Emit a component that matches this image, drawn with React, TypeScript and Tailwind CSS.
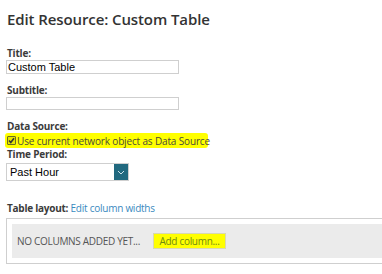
import React from "react";

export default function App() {
  const label = "font-['Open_Sans',sans-serif] font-bold text-[10px] leading-[14px] tracking-[-0.2px] text-[#3b3b3b]";
  return (
    <div className="w-[382px] h-[274px] overflow-hidden bg-white pl-[7px] pt-[9px]">
      <div className="font-['Open_Sans',sans-serif] font-semibold text-[15px] leading-[20px] text-[#333] tracking-[-0.1px]">
        Edit Resource: Custom Table
      </div>

      <div className={`${label} mt-[17px]`}>Title:</div>
      <div className="-ml-[1px] w-[173px] h-[14px] border border-[#cfcfcf] bg-white flex items-center px-[1px] font-['Liberation_Sans',Arial,sans-serif] text-[11px] text-black">
        Custom Table
      </div>

      <div className={`${label} mt-[9px]`}>Subtitle:</div>
      <div className="-ml-[1px] w-[173px] h-[13px] border border-[#cfcfcf] bg-white" />

      <div className={`${label} mt-[9px]`}>Data Source:</div>
      <div className="-ml-[2px] w-[203px] h-[15px] bg-[#ffff00] rounded-[3px] flex items-center pl-[2px]">
        <span className="w-[9px] h-[9px] border border-[#6b6b20] bg-[#e6e600] flex items-center justify-center rounded-[1px] shrink-0">
          <svg width="7" height="7" viewBox="0 0 7 7">
            <path d="M1 3.5 L2.8 5.5 L6 1.2" stroke="#333" strokeWidth="1.6" fill="none" />
          </svg>
        </span>
        <span className="ml-[1px] whitespace-nowrap font-['Open_Sans',sans-serif] text-[10px] leading-[14px] tracking-[-0.15px] text-[#4a4a3a]">
          Use current network object as Data Source
        </span>
      </div>

      <div className={`${label} -mt-[1px]`}>Time Period:</div>
      <div className="mt-[2px] -ml-[1px] w-[123px] h-[18px] border border-[#cfcfcf] bg-white flex items-stretch">
        <span className="flex-1 flex items-center pl-[3px] font-['Liberation_Sans',Arial,sans-serif] text-[11px] text-black">
          Past Hour
        </span>
        <span className="w-[14px] bg-[#21697f] flex items-center justify-center">
          <svg width="8" height="5" viewBox="0 0 8 5">
            <path d="M1 1 L4 4 L7 1" stroke="#cfe3ea" strokeWidth="1" fill="none" />
          </svg>
        </span>
      </div>

      <div className="mt-[20px] font-['Open_Sans',sans-serif] text-[10px] leading-[14px] tracking-[-0.25px] whitespace-nowrap">
        <span className="font-bold text-[#3b3b3b]">Table layout:</span>{" "}
        <span className="text-[#3a8ac0]">Edit column widths</span>
      </div>
      <div className="mt-[3px] -ml-[1px] w-[400px] border border-[#cfcfcf] p-[5px]">
        <div className="h-[34px] bg-[#ebebeb] flex items-center pl-[5px]">
          <span className="font-['Open_Sans',sans-serif] text-[10px] tracking-[-0.3px] text-[#555] whitespace-nowrap">
            NO COLUMNS ADDED YET...
          </span>
          <span className="ml-[13px] h-[16px] w-[73px] bg-[#ffff00] border border-[#d8d8b0] flex items-center justify-center font-['Open_Sans',sans-serif] text-[10px] tracking-[-0.3px] text-[#6f8a10] whitespace-nowrap">
            Add column...
          </span>
        </div>
      </div>
    </div>
  );
}
